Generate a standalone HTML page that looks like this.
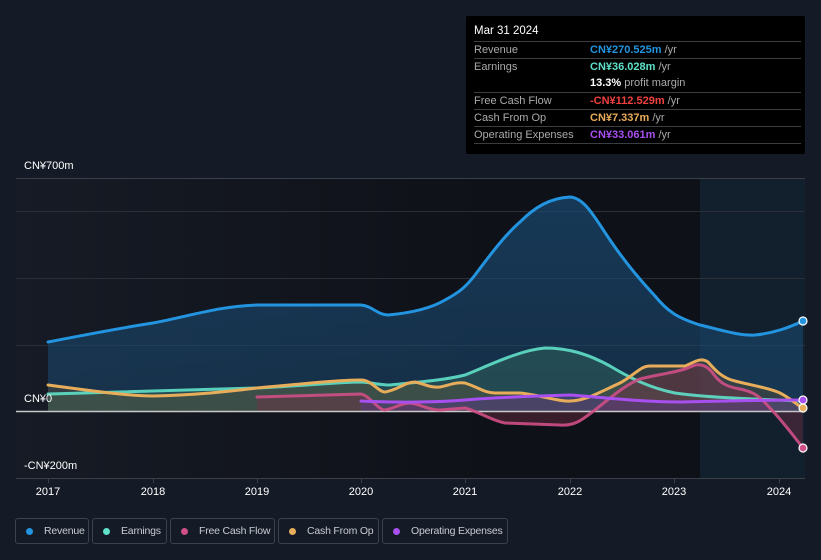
<!DOCTYPE html>
<html><head><meta charset="utf-8"><style>
html,body{margin:0;width:821px;height:560px;overflow:hidden}
body{background:#151b26;font-family:"Liberation Sans","Noto Sans CJK SC",sans-serif;position:relative}
.tt{position:absolute;left:466px;top:16px;width:339px;height:138px;background:#000;border-radius:2px;color:#aaa;font-size:11px}
.tt .h{color:#fff;font-size:11.5px;position:absolute;left:8px;top:9px}
.row{position:absolute;left:8px;width:327px;border-top:1px solid #3a3d42;height:17px;line-height:17px}
.row span.l{position:absolute;left:0}
.row span.v{position:absolute;left:116px;font-weight:bold;white-space:nowrap}
.row span.v i{font-style:normal;font-weight:normal;color:#aaa}
.leg{position:absolute;top:518px;height:26px;border:1px solid #3c414b;border-radius:3px;color:#c8cad0;font-size:10.5px;letter-spacing:-0.2px;line-height:25px;box-sizing:border-box;white-space:nowrap}
.leg b{position:absolute;left:10px;top:9px;width:7px;height:7px;border-radius:50%}
.leg span{position:absolute;left:28px}
.ax{position:absolute;color:#fff;font-size:11px}
</style></head><body>
<svg width="821" height="560" style="position:absolute;left:0;top:0">
<defs>
<linearGradient id="bg" x1="0" x2="1"><stop offset="0" stop-color="#161b25"/><stop offset="0.6" stop-color="#0f1118"/><stop offset="1" stop-color="#0f1118"/></linearGradient>
<linearGradient id="rv" x1="0" y1="0" x2="0" y2="1"><stop offset="0" stop-color="#1a4a72" stop-opacity="0.7"/><stop offset="1" stop-color="#1a4a72" stop-opacity="0.5"/></linearGradient>
</defs>
<rect x="16" y="178" width="789" height="300" fill="url(#bg)"/>
<rect x="700" y="178" width="105" height="300" fill="#16324a" opacity="0.45"/>
<g stroke="#2a2f38" stroke-width="1">
<line x1="16" y1="178.5" x2="805" y2="178.5" stroke="#3a3f48"/>
<line x1="16" y1="211.5" x2="805" y2="211.5"/>
<line x1="16" y1="278.5" x2="805" y2="278.5"/>
<line x1="16" y1="345.5" x2="805" y2="345.5"/>
<line x1="16" y1="478.5" x2="805" y2="478.5" stroke="#3a3f48"/>
</g>
<path d="M48,342 C90,334 120,328 153,323 C190,316 220,306 257,305 L361,305 C372,306 378,315 388,315 C410,313 430,309 445,300 C458,293 465,288 475,275 C490,255 505,235 520,222 C535,207 550,198 570,197 C585,198 595,218 610,240 C625,262 640,280 655,296 C668,312 678,318 700,325 C725,331 740,336 755,335 C775,333 790,327 803,321 L803,411 L48,411Z" fill="url(#rv)"/>
<path d="M48,394 C100,393 150,391 257,388 C300,386 340,382 361,382 C375,383 380,385 390,385 C420,382 445,380 465,375 C490,365 520,350 545,348 C570,348 590,355 610,366 C630,378 650,388 675,393 C700,397 750,399 803,401 L803,411 L48,411Z" fill="#2d5e5c" opacity="0.6"/>
<path d="M48,385 C100,392 130,396 153,396 C200,395 230,391 257,388 C300,384 340,380 361,380 C372,380 378,392 385,392 C398,390 405,382 415,382 C425,384 430,388 440,387 C450,385 455,382 465,383 C480,388 485,393 495,393 L520,393 C540,395 560,402 570,401 C585,401 600,392 620,383 C635,375 640,366 650,366 L685,366 C695,362 700,357 708,362 C715,370 722,378 735,381 C750,385 770,388 780,393 C790,398 797,405 803,408 L803,411 L48,411Z" fill="#6b5535" opacity="0.35"/>
<path d="M257,397 L361,394 C370,396 378,410 385,410 C395,408 402,403 410,403 C420,404 428,410 440,410 L465,408 C480,412 490,420 505,423 L560,425 C575,426 582,420 595,410 C610,398 625,385 640,379 C655,375 680,372 690,367 C698,363 705,364 712,372 C720,384 728,387 740,389 C755,392 760,397 770,408 C785,424 795,438 803,448 L803,411 L257,411Z" fill="#7a3045" opacity="0.4"/>
<path d="M361,401 C400,403 440,402 465,400 C500,397 540,396 570,395 C600,397 640,402 680,402 C720,401 760,400 803,400 L803,411 L361,411Z" fill="#5a3a8a" opacity="0.45"/>
<line x1="16" y1="411.5" x2="805" y2="411.5" stroke="#c8c8c8" stroke-width="1.5"/>
<g fill="none" stroke-width="3" stroke-linecap="round" stroke-linejoin="round">
<path d="M48,342 C90,334 120,328 153,323 C190,316 220,306 257,305 L361,305 C372,306 378,315 388,315 C410,313 430,309 445,300 C458,293 465,288 475,275 C490,255 505,235 520,222 C535,207 550,198 570,197 C585,198 595,218 610,240 C625,262 640,280 655,296 C668,312 678,318 700,325 C725,331 740,336 755,335 C775,333 790,327 803,321" stroke="#2394df"/>
<path d="M48,394 C100,393 150,391 257,388 C300,386 340,382 361,382 C375,383 380,385 390,385 C420,382 445,380 465,375 C490,365 520,350 545,348 C570,348 590,355 610,366 C630,378 650,388 675,393 C700,397 750,399 803,401" stroke="#5fe0c8" opacity="0.9"/>
<path d="M48,385 C100,392 130,396 153,396 C200,395 230,391 257,388 C300,384 340,380 361,380 C372,380 378,392 385,392 C398,390 405,382 415,382 C425,384 430,388 440,387 C450,385 455,382 465,383 C480,388 485,393 495,393 L520,393 C540,395 560,402 570,401 C585,401 600,392 620,383 C635,375 640,366 650,366 L685,366 C695,362 700,357 708,362 C715,370 722,378 735,381 C750,385 770,388 780,393 C790,398 797,405 803,408" stroke="#e8ad5a"/>
<path d="M257,397 L361,394 C370,396 378,410 385,410 C395,408 402,403 410,403 C420,404 428,410 440,410 L465,408 C480,412 490,420 505,423 L560,425 C575,426 582,420 595,410 C610,398 625,385 640,379 C655,375 680,372 690,367 C698,363 705,364 712,372 C720,384 728,387 740,389 C755,392 760,397 770,408 C785,424 795,438 803,448" stroke="#cf4f86" opacity="0.9"/>
<path d="M361,401 C400,403 440,402 465,400 C500,397 540,396 570,395 C600,397 640,402 680,402 C720,401 760,400 803,400" stroke="#a84ff0"/>
</g>
<g stroke="#fff" stroke-width="1.2">
<circle cx="803" cy="321" r="4" fill="#2394df"/>
<circle cx="803" cy="408" r="4" fill="#e8ad5a"/>
<circle cx="803" cy="400" r="4" fill="#a84ff0"/>
<circle cx="803" cy="448" r="4" fill="#cf4f86"/>
</g>
<g stroke="#3a3f48"><line x1="48.5" y1="478" x2="48.5" y2="483"/><line x1="153.5" y1="478" x2="153.5" y2="483"/><line x1="257.5" y1="478" x2="257.5" y2="483"/><line x1="361.5" y1="478" x2="361.5" y2="483"/><line x1="465.5" y1="478" x2="465.5" y2="483"/><line x1="570.5" y1="478" x2="570.5" y2="483"/><line x1="674.5" y1="478" x2="674.5" y2="483"/><line x1="779.5" y1="478" x2="779.5" y2="483"/></g>
<g fill="#fff" font-size="11" font-family="Liberation Sans,sans-serif" text-anchor="middle">
<text x="48" y="495">2017</text><text x="153" y="495">2018</text><text x="257" y="495">2019</text><text x="361" y="495">2020</text><text x="465" y="495">2021</text><text x="570" y="495">2022</text><text x="674" y="495">2023</text><text x="779" y="495">2024</text>
</g>
</svg>
<div class="ax" style="left:24px;top:160px">CN¥700m</div>
<div class="ax" style="left:24px;top:393px">CN¥0</div>
<div class="ax" style="left:24px;top:460px">-CN¥200m</div>
<div class="tt">
<div class="h">Mar 31 2024</div>
<div class="row" style="top:25px"><span class="l">Revenue</span><span class="v" style="color:#2394df">CN¥270.525m <i>/yr</i></span></div>
<div class="row" style="top:42px"><span class="l">Earnings</span><span class="v" style="color:#5fe0c8">CN¥36.028m <i>/yr</i></span></div>
<div class="row" style="top:59px;border-top:none"><span class="v" style="color:#fff">13.3% <i>profit margin</i></span></div>
<div class="row" style="top:76px"><span class="l">Free Cash Flow</span><span class="v" style="color:#f0413f">-CN¥112.529m <i>/yr</i></span></div>
<div class="row" style="top:93px"><span class="l">Cash From Op</span><span class="v" style="color:#e8ad5a">CN¥7.337m <i>/yr</i></span></div>
<div class="row" style="top:110px"><span class="l">Operating Expenses</span><span class="v" style="color:#a84ff0">CN¥33.061m <i>/yr</i></span></div>
<div class="row" style="top:127px;height:1px"></div>
</div>
<div class="leg" style="left:15px;width:74px"><b style="background:#2394df"></b><span>Revenue</span></div>
<div class="leg" style="left:92px;width:75px"><b style="background:#5fe0c8"></b><span>Earnings</span></div>
<div class="leg" style="left:170px;width:105px"><b style="background:#cf4f86"></b><span>Free Cash Flow</span></div>
<div class="leg" style="left:278px;width:101px"><b style="background:#e8ad5a"></b><span>Cash From Op</span></div>
<div class="leg" style="left:382px;width:126px"><b style="background:#a84ff0"></b><span>Operating Expenses</span></div>
</body></html>
